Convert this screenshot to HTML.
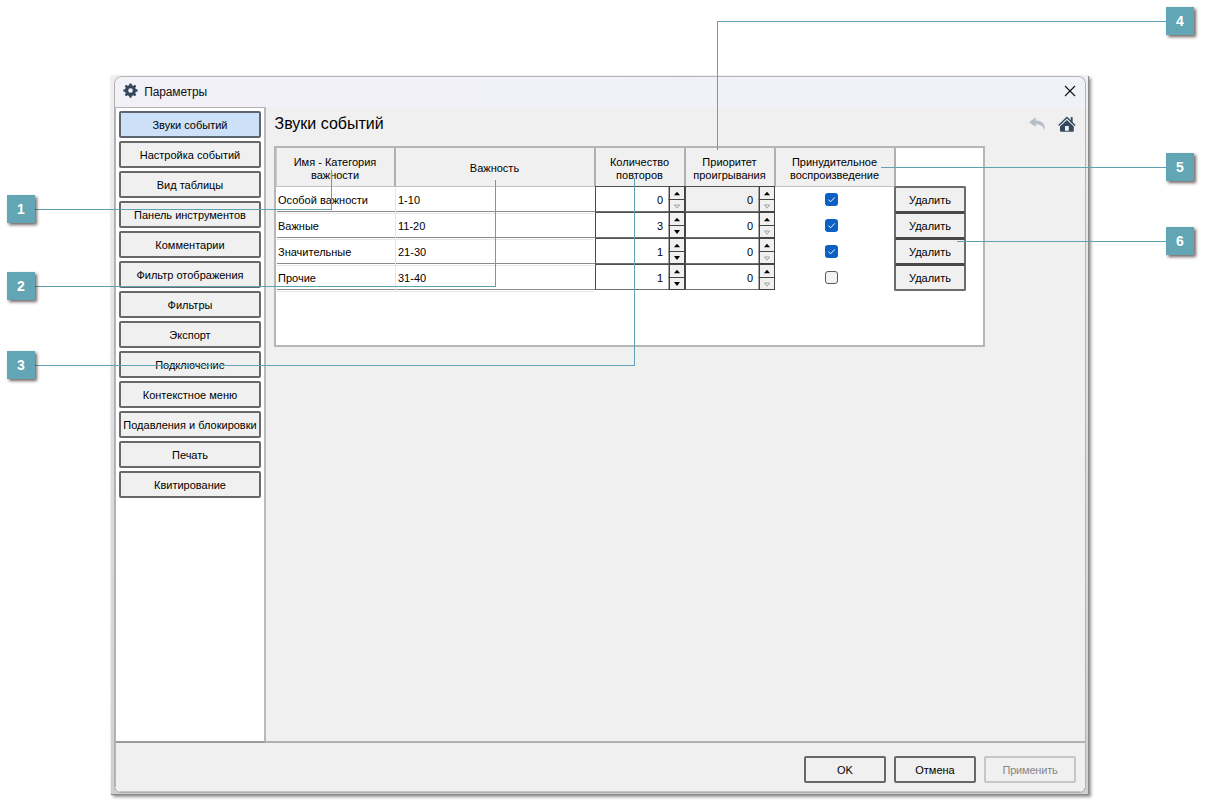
<!DOCTYPE html>
<html lang="ru"><head><meta charset="utf-8"><title>Параметры</title>
<style>
html,body{margin:0;padding:0;background:#fff;}
body{width:1205px;height:803px;position:relative;overflow:hidden;font-family:"Liberation Sans",sans-serif;font-size:11px;color:#000;}
.abs{position:absolute;}
#shadow{position:absolute;left:111px;top:76px;width:977px;height:718px;background:linear-gradient(#efefef,#dedede 50%,#d0d0d0);border-right:1px solid #8a8a8a;border-bottom:1px solid #8a8a8a;box-shadow:2px 2px 3px rgba(0,0,0,.42),0 0 2px rgba(0,0,0,.12);}
#win{position:absolute;left:114px;top:76px;width:970px;height:715px;border:1px solid #b4b4b4;border-left-color:#b0b0b0;border-bottom-color:#adadad;border-radius:8px 8px 7px 7px;background:#f0f0f0;overflow:hidden;}
#win::after{content:"";position:absolute;left:0;top:30px;bottom:5px;width:1px;background:#b6b6b6;z-index:5;}
#win::before{content:"";position:absolute;left:5px;right:5px;bottom:0;height:1px;background:#c4c4c4;z-index:5;}
#title{position:absolute;left:0;top:0;width:970px;height:30px;background:linear-gradient(90deg,#f3f1f8 0%,#f1f1f8 45%,#eff3f9 100%);}
#title .t{position:absolute;left:29.3px;top:8px;font-size:12px;letter-spacing:-0.15px;line-height:14px;color:#111;white-space:nowrap;}
#side{position:absolute;left:0;top:30px;width:148px;height:633px;background:#fff;border-top:1px solid #b4b4b4;border-left:1px solid #b8b8b8;border-right:2px solid #bababa;border-bottom:2px solid #9a9a9a;z-index:2;}
#hline{position:absolute;left:0;top:664px;width:970px;height:2px;background:#b2b2b2;}
.sb{position:absolute;left:3px;width:138px;height:23px;border:2px solid #686868;border-radius:2px;background:#f0f0f0;text-align:center;line-height:24px;white-space:nowrap;}
.sb.sel{background:#cce1f7;border-color:#5d6670;}
#h1{position:absolute;left:159.5px;top:37px;font-size:16px;line-height:20px;white-space:nowrap;}
#tbl{position:absolute;left:159px;top:69px;width:707px;height:197px;border:2px solid #b6b6b6;background:#fff;}
#tin{position:absolute;left:1px;top:0;width:706px;height:197px;}
.gl{position:absolute;left:0;width:317px;height:1px;background:#e8e8e8;}
.hc{position:absolute;top:0;height:39px;padding-top:3px;padding-right:1px;background:#f0f0f0;border-right:2px solid #b0b0b0;border-bottom:1px solid #c2c2c2;text-align:center;line-height:13px;display:flex;align-items:center;justify-content:center;box-sizing:border-box;}
.cell{position:absolute;white-space:nowrap;line-height:13px;}
.rl{position:absolute;height:1px;background:#8c8c8c;}
.vl{position:absolute;width:1px;background:#e6e6e6;}
.spin{position:absolute;width:88px;height:24px;border:1px solid #484848;border-top-color:#505050;border-bottom-color:#707070;background:#fff;}
.spin.dis{background:#f0f0f0;}
.spin .v{position:absolute;right:21px;top:7px;line-height:13px;}
.spin .u,.spin .d{position:absolute;right:-1px;width:14px;border:1px solid #444;background:#f0f0f0;box-shadow:-1px 0 0 rgba(68,68,68,.45);}
.spin .u{top:-1px;height:12px;} .spin .d{top:12px;height:11px;}
.del{position:absolute;left:617px;width:68px;height:23px;border:2px solid #6c6c6c;border-radius:2px;background:#f0f0f0;text-align:center;line-height:25px;}
.cb{position:absolute;left:548px;width:13px;height:13px;border-radius:3px;background:#0b60c4;}
.cb.off{background:#f3f3f3;border:1px solid #5a5a5a;width:11px;height:11px;}
.btn{position:absolute;top:679px;width:78px;height:23px;border:2px solid #686868;border-radius:2px;background:#f0f0f0;text-align:center;line-height:24px;}
.btn.dis{border-color:#c6c6c6;color:#868686;letter-spacing:-0.2px;}
.badge{position:absolute;z-index:11;width:28px;height:28px;background:#62a5b4;color:#fff;font-weight:bold;font-size:14px;line-height:28px;text-align:center;box-shadow:2px 2px 3px rgba(40,20,20,.65);}
.ln{position:absolute;background:#5fa2b1;z-index:10;}
</style></head><body>
<div id="shadow"></div>
<div id="win">
<div id="title"><svg class="abs" style="left:8px;top:6px" width="15" height="15" viewBox="0 0 16 16"><g fill="#34495e"><circle cx="8" cy="8" r="5.85"/><rect x="6.6" y="0.4" width="2.8" height="3.4" rx="0.9" transform="rotate(0 8 8)"/><rect x="6.6" y="0.4" width="2.8" height="3.4" rx="0.9" transform="rotate(45 8 8)"/><rect x="6.6" y="0.4" width="2.8" height="3.4" rx="0.9" transform="rotate(90 8 8)"/><rect x="6.6" y="0.4" width="2.8" height="3.4" rx="0.9" transform="rotate(135 8 8)"/><rect x="6.6" y="0.4" width="2.8" height="3.4" rx="0.9" transform="rotate(180 8 8)"/><rect x="6.6" y="0.4" width="2.8" height="3.4" rx="0.9" transform="rotate(225 8 8)"/><rect x="6.6" y="0.4" width="2.8" height="3.4" rx="0.9" transform="rotate(270 8 8)"/><rect x="6.6" y="0.4" width="2.8" height="3.4" rx="0.9" transform="rotate(315 8 8)"/></g><circle cx="8" cy="8" r="2.45" fill="#f3f1f8"/></svg><div class="t">Параметры</div><svg class="abs" style="left:949px;top:8px" width="12" height="12" viewBox="0 0 12 12"><path d="M1 1 L11 11 M11 1 L1 11" stroke="#111" stroke-width="1.1" fill="none"/></svg></div>
<div id="side">
<div class="sb sel" style="top:3px">Звуки событий</div>
<div class="sb" style="top:33px">Настройка событий</div>
<div class="sb" style="top:63px">Вид таблицы</div>
<div class="sb" style="top:93px">Панель инструментов</div>
<div class="sb" style="top:123px">Комментарии</div>
<div class="sb" style="top:153px">Фильтр отображения</div>
<div class="sb" style="top:183px">Фильтры</div>
<div class="sb" style="top:213px">Экспорт</div>
<div class="sb" style="top:243px">Подключение</div>
<div class="sb" style="top:273px">Контекстное меню</div>
<div class="sb" style="top:303px">Подавления и блокировки</div>
<div class="sb" style="top:333px">Печать</div>
<div class="sb" style="top:363px">Квитирование</div>
</div>
<div id="hline"></div>
<div id="h1">Звуки событий</div>
<svg class="abs" style="left:910px;top:35px" width="55" height="24" viewBox="1025 112 55 24"><path d="M1035.6 117.2 L1029.2 122.2 L1035.6 126.9 L1035.6 124.2 C1040.3 124.2 1043.2 125.8 1044.5 130.4 C1045.7 124.6 1042.6 120.4 1035.6 120.4 Z" fill="#b5bdc6"/><g fill="#34495e"><path d="M1058.7 125.5 L1066.9 117.5 L1075.1 125.5" stroke="#34495e" stroke-width="1.4" fill="none"/><rect x="1070.7" y="117.1" width="1.9" height="5.2"/><path fill-rule="evenodd" d="M1066.9 120 L1073.8 126.4 L1073.8 130.7 Q1073.8 131.8 1072.7 131.8 L1061.1 131.8 Q1060 131.8 1060 130.7 L1060 126.4 Z M1065 125.9 h3.8 v4.8 h-3.8 Z"/></g></svg>
<div id="tbl"><div id="tin">
<div class="hc" style="left:-1px;width:120px;border-left:1px solid #cdcdcd"><span>Имя - Категория<br>важности</span></div>
<div class="hc" style="left:119px;width:200px"><span>Важность</span></div>
<div class="hc" style="left:319px;width:90px"><span>Количество<br>повторов</span></div>
<div class="hc" style="left:409px;width:90px"><span>Приоритет<br>проигрывания</span></div>
<div class="hc" style="left:499px;width:120px"><span>Принудительное<br>воспроизведение</span></div>
<div class="cell" style="left:1px;top:46px">Особой важности</div><div class="cell" style="left:121px;top:46px">1-10</div><div class="gl" style="top:65px"></div><div class="rl" style="left:0;top:63px;width:118px"></div><div class="rl" style="left:119px;top:63px;width:199px"></div><div class="spin" style="left:318px;top:38px"><div class="v">0</div><div class="u"><svg class="abs" style="left:3px;top:4px" width="8" height="5" viewBox="0 0 8 5"><path d="M4 0.8 L7 4.2 L1 4.2 Z" fill="#000"/></svg></div><div class="d"><svg class="abs" style="left:3px;top:4px" width="8" height="5" viewBox="0 0 8 5"><path d="M4 4.2 L6.6 1 L1.4 1 Z" fill="none" stroke="#a2a2a2" stroke-width="1"/></svg></div></div><div class="spin dis" style="left:408px;top:38px"><div class="v">0</div><div class="u"><svg class="abs" style="left:3px;top:4px" width="8" height="5" viewBox="0 0 8 5"><path d="M4 0.8 L7 4.2 L1 4.2 Z" fill="#000"/></svg></div><div class="d"><svg class="abs" style="left:3px;top:4px" width="8" height="5" viewBox="0 0 8 5"><path d="M4 4.2 L6.6 1 L1.4 1 Z" fill="none" stroke="#a2a2a2" stroke-width="1"/></svg></div></div><div class="cb" style="top:45px"><svg class="abs" style="left:0;top:0" width="13" height="13" viewBox="0 0 13 13"><path d="M3.4 6.6 L5.6 8.8 L9.8 4.4" stroke="#fff" stroke-width="0.95" fill="none"/></svg></div><div class="del" style="top:38px;border-bottom-color:#484848;">Удалить</div>
<div class="cell" style="left:1px;top:72px">Важные</div><div class="cell" style="left:121px;top:72px">11-20</div><div class="gl" style="top:91px"></div><div class="rl" style="left:0;top:89px;width:118px"></div><div class="rl" style="left:119px;top:89px;width:199px"></div><div class="spin" style="left:318px;top:64px"><div class="v">3</div><div class="u"><svg class="abs" style="left:3px;top:4px" width="8" height="5" viewBox="0 0 8 5"><path d="M4 0.8 L7 4.2 L1 4.2 Z" fill="#000"/></svg></div><div class="d"><svg class="abs" style="left:3px;top:3px" width="8" height="6" viewBox="0 0 8 6"><path d="M4 5 L7 0.9 L1 0.9 Z" fill="#000"/></svg></div></div><div class="spin" style="left:408px;top:64px"><div class="v">0</div><div class="u"><svg class="abs" style="left:3px;top:4px" width="8" height="5" viewBox="0 0 8 5"><path d="M4 0.8 L7 4.2 L1 4.2 Z" fill="#000"/></svg></div><div class="d"><svg class="abs" style="left:3px;top:4px" width="8" height="5" viewBox="0 0 8 5"><path d="M4 4.2 L6.6 1 L1.4 1 Z" fill="none" stroke="#a2a2a2" stroke-width="1"/></svg></div></div><div class="cb" style="top:71px"><svg class="abs" style="left:0;top:0" width="13" height="13" viewBox="0 0 13 13"><path d="M3.4 6.6 L5.6 8.8 L9.8 4.4" stroke="#fff" stroke-width="0.95" fill="none"/></svg></div><div class="del" style="top:64px;border-top-color:#484848;border-bottom-color:#484848;">Удалить</div>
<div class="cell" style="left:1px;top:98px">Значительные</div><div class="cell" style="left:121px;top:98px">21-30</div><div class="gl" style="top:117px"></div><div class="rl" style="left:0;top:115px;width:118px"></div><div class="rl" style="left:119px;top:115px;width:199px"></div><div class="spin" style="left:318px;top:90px"><div class="v">1</div><div class="u"><svg class="abs" style="left:3px;top:4px" width="8" height="5" viewBox="0 0 8 5"><path d="M4 0.8 L7 4.2 L1 4.2 Z" fill="#000"/></svg></div><div class="d"><svg class="abs" style="left:3px;top:3px" width="8" height="6" viewBox="0 0 8 6"><path d="M4 5 L7 0.9 L1 0.9 Z" fill="#000"/></svg></div></div><div class="spin" style="left:408px;top:90px"><div class="v">0</div><div class="u"><svg class="abs" style="left:3px;top:4px" width="8" height="5" viewBox="0 0 8 5"><path d="M4 0.8 L7 4.2 L1 4.2 Z" fill="#000"/></svg></div><div class="d"><svg class="abs" style="left:3px;top:4px" width="8" height="5" viewBox="0 0 8 5"><path d="M4 4.2 L6.6 1 L1.4 1 Z" fill="none" stroke="#a2a2a2" stroke-width="1"/></svg></div></div><div class="cb" style="top:97px"><svg class="abs" style="left:0;top:0" width="13" height="13" viewBox="0 0 13 13"><path d="M3.4 6.6 L5.6 8.8 L9.8 4.4" stroke="#fff" stroke-width="0.95" fill="none"/></svg></div><div class="del" style="top:90px;border-top-color:#484848;border-bottom-color:#484848;">Удалить</div>
<div class="cell" style="left:1px;top:124px">Прочие</div><div class="cell" style="left:121px;top:124px">31-40</div><div class="gl" style="top:143px"></div><div class="rl" style="left:0;top:141px;width:118px"></div><div class="rl" style="left:119px;top:141px;width:199px"></div><div class="spin" style="left:318px;top:116px"><div class="v">1</div><div class="u"><svg class="abs" style="left:3px;top:4px" width="8" height="5" viewBox="0 0 8 5"><path d="M4 0.8 L7 4.2 L1 4.2 Z" fill="#000"/></svg></div><div class="d"><svg class="abs" style="left:3px;top:3px" width="8" height="6" viewBox="0 0 8 6"><path d="M4 5 L7 0.9 L1 0.9 Z" fill="#000"/></svg></div></div><div class="spin" style="left:408px;top:116px"><div class="v">0</div><div class="u"><svg class="abs" style="left:3px;top:4px" width="8" height="5" viewBox="0 0 8 5"><path d="M4 0.8 L7 4.2 L1 4.2 Z" fill="#000"/></svg></div><div class="d"><svg class="abs" style="left:3px;top:4px" width="8" height="5" viewBox="0 0 8 5"><path d="M4 4.2 L6.6 1 L1.4 1 Z" fill="none" stroke="#a2a2a2" stroke-width="1"/></svg></div></div><div class="cb off" style="top:123px"></div><div class="del" style="top:116px;border-top-color:#484848;">Удалить</div>
<div class="vl" style="left:118px;top:40px;height:103px"></div>
</div></div>
<div class="btn" style="left:689px">OK</div><div class="btn" style="left:779px">Отмена</div><div class="btn dis" style="left:869px;width:88px">Применить</div>
</div>
<div class="ln" style="left:35px;top:209px;width:297px;height:1px"></div><div class="ln" style="left:331px;top:170px;width:1px;height:40px"></div><div class="ln" style="left:35px;top:286px;width:461px;height:1px"></div><div class="ln" style="left:495px;top:180px;width:1px;height:107px"></div><div class="ln" style="left:35px;top:365px;width:600px;height:1px"></div><div class="ln" style="left:634px;top:178px;width:1px;height:188px"></div><div class="ln" style="left:717px;top:21px;width:449px;height:1px"></div><div class="ln" style="left:717px;top:21px;width:1px;height:129px"></div><div class="ln" style="left:881px;top:167px;width:285px;height:1px"></div><div class="ln" style="left:957px;top:241px;width:209px;height:1px"></div>
<div class="badge" style="left:7px;top:195px">1</div><div class="badge" style="left:7px;top:272px">2</div><div class="badge" style="left:7px;top:351px">3</div><div class="badge" style="left:1166px;top:7px">4</div><div class="badge" style="left:1166px;top:153px">5</div><div class="badge" style="left:1166px;top:227px">6</div>
</body></html>
